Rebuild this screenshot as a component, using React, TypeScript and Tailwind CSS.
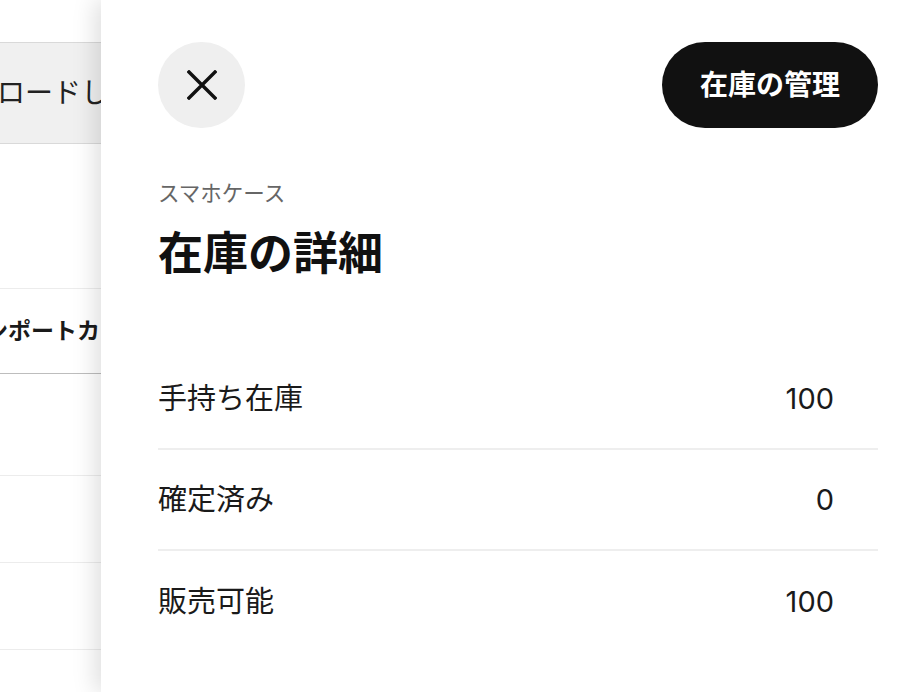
import React from "react";

const rows = [
  { label: "手持ち在庫", value: 100 },
  { label: "確定済み", value: 0 },
  { label: "販売可能", value: 100 },
];

function CloseIcon() {
  return (
    <svg width="30" height="30" viewBox="0 0 30 30" fill="none">
      <path d="M2 2L28 28M28 2L2 28" stroke="#111" strokeWidth="3.4" strokeLinecap="square" />
    </svg>
  );
}

export default function App() {
  return (
    <div
      className="relative w-full h-[692px] overflow-hidden bg-white text-[#1a1a1a]"
      style={{ fontFamily: "Inter, 'Noto Sans CJK JP', sans-serif" }}
    >
      {/* background page (partly covered by the drawer) */}
      <div className="flex flex-col pt-[42px]">
        <div className="h-[102px] flex items-center bg-[#f0f0f0] border-y border-[#d9d9d9] whitespace-nowrap">
          <span className="ml-[-3px] text-[28px] text-[#222]">ロードしてください</span>
        </div>
        <div className="h-[145px] border-b border-[#ececec]" />
        <div className="h-[85px] flex items-center border-b border-[#bdbdbd] whitespace-nowrap">
          <span className="ml-[-38px] text-[23px] font-bold text-[#1a1a1a]">インポートカテゴリ</span>
        </div>
        <div className="h-[102px] border-b border-[#ececec]" />
        <div className="h-[87px] border-b border-[#ececec]" />
        <div className="h-[87px] border-b border-[#ececec]" />
      </div>

      {/* drawer */}
      <div className="absolute top-0 bottom-0 left-[101px] right-0 bg-white shadow-[-6px_0_22px_rgba(0,0,0,0.13)] pt-[42px] pl-[57px] pr-[40px]">
        <div className="flex items-center justify-between">
          <button className="w-[87px] h-[86px] rounded-full bg-[#efefef] flex items-center justify-center">
            <CloseIcon />
          </button>
          <button className="h-[86px] px-[38px] rounded-full bg-[#111111] text-white text-[28px] font-bold">
            在庫の管理
          </button>
        </div>

        <p className="mt-[50px] text-[21.5px] leading-[30px] text-[#666666]">スマホケース</p>
        <h1 className="mt-[17px] text-[45px] leading-[57px] font-bold text-[#111]">在庫の詳細</h1>

        <div className="mt-[67px] flex flex-col">
          {rows.map((r, i) => (
            <div
              key={r.label}
              className={
                "h-[101px] flex items-center justify-between pr-[44px] " +
                (i < rows.length - 1 ? "border-b-2 border-[#eeeeee]" : "")
              }
            >
              <span className="text-[29px] text-[#1a1a1a]">{r.label}</span>
              <span className="text-[29px] text-[#1a1a1a]">{r.value}</span>
            </div>
          ))}
        </div>
      </div>
    </div>
  );
}
